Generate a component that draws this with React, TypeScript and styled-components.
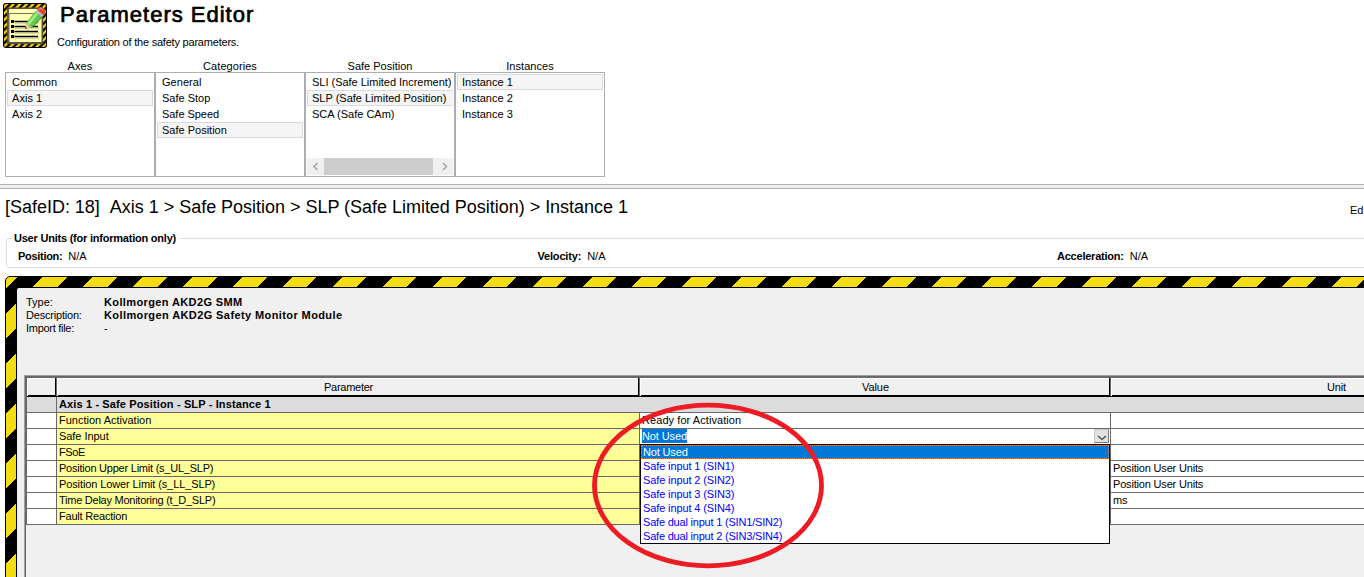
import React from 'react';
import styled, { createGlobalStyle, css } from 'styled-components';

const GlobalStyle = createGlobalStyle`
  *, *::before, *::after { box-sizing: border-box; }
  body {
    margin: 0;
    background: #fff;
    color: #000;
    font: 11px/12px 'Liberation Sans', Arial, sans-serif;
    overflow: hidden;
  }
`;

const GRID_LINE = '#696969';

const Page = styled.main`
  position: relative;
  display: flex;
  flex-direction: column;
  width: 1364px;
  height: 577px;
  overflow: hidden;
  white-space: pre;
`;

const Text = styled.span<{ $track?: number }>`
  letter-spacing: ${(p) => p.$track ?? 0}px;
`;

/* ---------- header ---------- */

const Header = styled.header`
  display: flex;
  flex: none;
  height: 59px;
  padding: 2px 0 0 3px;
  gap: 10px;
`;

const IconSlot = styled.div`
  padding-top: 1px;
  svg { display: block; }
`;

const HeaderText = styled.div`
  display: flex;
  flex-direction: column;
  gap: 9px;
`;

const Title = styled.h1`
  margin: 0;
  padding-left: 3px;
  font-size: 22px;
  font-weight: 400;
  line-height: 25px;
  letter-spacing: 1px;
  -webkit-text-stroke: 0.7px #000;
`;

const Subtitle = styled.p`
  margin: 0;
  letter-spacing: -0.21px;
`;

/* ---------- selector lists ---------- */

const Selectors = styled.section`
  display: flex;
  flex: none;
  height: 125px;
  padding-left: 5px;
`;

const SelectorColumn = styled.div`
  display: flex;
  flex-direction: column;
  width: 150px;
`;

const SelectorLabel = styled.div`
  height: 13px;
  line-height: 14px;
  text-align: center;
`;

const ListBox = styled.div`
  display: flex;
  flex-direction: column;
  height: 105px;
  padding: 1px;
  border: 1px solid #abadb3;
  overflow: hidden;
`;

const ListItem = styled.div<{ $selected?: boolean; $cut?: boolean }>`
  height: 16px;
  padding-left: 4px;
  border: 1px solid transparent;
  line-height: 14px;
  ${(p) => p.$selected && css`
    background: #f5f5f5;
    border-color: #dadada;
  `}
  ${(p) => p.$cut && css`border-right-width: 0;`}
`;

const ScrollBar = styled.div`
  display: flex;
  align-items: stretch;
  height: 17px;
  margin-top: auto;
  background: #f0f0f0;
`;

const ScrollArrow = styled.div`
  display: flex;
  align-items: center;
  justify-content: center;
  width: 17px;
`;

const ScrollThumb = styled.div`
  width: 109px;
  margin-right: 3px;
  background: #cdcdcd;
`;

const Splitter = styled.div`
  flex: none;
  height: 5px;
  background: #f0f0f0;
  border: solid #b0b0b0;
  border-width: 1px 0;
`;

/* ---------- breadcrumb and units ---------- */

const Breadcrumb = styled.div`
  display: flex;
  flex: none;
  justify-content: space-between;
  height: 44px;
  padding: 8px 0 0 5px;
`;

const Path = styled.h2`
  display: flex;
  gap: 10px;
  margin: 0;
  font-size: 18px;
  font-weight: 400;
  line-height: 20px;
  letter-spacing: -0.02px;
`;

const EditLink = styled.div`
  width: 14px;
  padding-top: 7px;
  overflow: hidden;
`;

const Units = styled.fieldset`
  flex: none;
  width: 1580px;
  height: 35px;
  margin: 0 0 0 6px;
  padding: 6px 0 0 11px;
  border: 1px solid #d5dfe5;
  border-radius: 3px;
`;

const UnitsLegend = styled.legend`
  height: 11px;
  margin-left: -6px;
  padding: 0 3px 0 2px;
  overflow: hidden;
  font-weight: 700;
  line-height: 10px;
  letter-spacing: -0.22px;
`;

const UnitsRow = styled.div`
  display: grid;
  grid-template-columns: repeat(3, 519.5px);
`;

const UnitEntry = styled.div`
  display: flex;
  gap: 6px;
`;

const UnitName = styled(Text)`
  font-weight: 700;
`;

/* ---------- hazard frame ---------- */

const HazardFrame = styled.section`
  flex: none;
  width: 1600px;
  height: 340px;
  margin: 8px 0 0 5px;
  padding: 10px;
  border: 1px solid #000;
  border-radius: 5px;
  background: repeating-linear-gradient(
    135deg,
    #f4dc12 0 7.78px,
    #000 7.78px 25.46px,
    #f4dc12 25.46px 35.355px
  ) padding-box;
`;

const HazardBody = styled.div`
  height: 100%;
  padding: 7px 0 0 7px;
  border: 1px solid #000;
  border-radius: 3px;
  background: #f0f0f0;
`;

const DeviceInfo = styled.dl`
  display: grid;
  grid-template-columns: 78px auto;
  grid-auto-rows: 13px;
  height: 80px;
  margin: 0;
  padding-left: 2px;
  line-height: 14px;
`;

const InfoName = styled.dt`
  margin: 0;
`;

const InfoValue = styled.dd<{ $plain?: boolean }>`
  margin: 0;
  font-weight: ${(p) => (p.$plain ? 400 : 700)};
`;

/* ---------- parameter table ---------- */

const TableFrame = styled.div`
  height: 260px;
  border-left: 1px solid #a0a0a0;
  border-top: 1px solid #a0a0a0;
`;

const TableInner = styled.div`
  height: 100%;
  border-left: 1px solid ${GRID_LINE};
  border-top: 1px solid ${GRID_LINE};
`;

const Grid = styled.div`
  width: 1536px;
  border-left: 1px solid ${GRID_LINE};
  border-top: 1px solid ${GRID_LINE};
`;

const rowColumns = css`
  display: grid;
  grid-template-columns: 30px 583px 471px 451px;
`;

const HeadRow = styled.div`
  ${rowColumns}
  height: 19px;
  border-bottom: 2px solid #000;
`;

const HeadCell = styled.div`
  padding-left: 1px;
  border-right: 1px solid ${GRID_LINE};
  box-shadow: inset -1px 0 #000, inset 1px 1px #fff;
  line-height: 18px;
  text-align: center;
`;

const Row = styled.div`
  ${rowColumns}
  height: 16px;
`;

const GroupRow = styled.div`
  display: grid;
  grid-template-columns: 30px 1505px;
  height: 16px;
`;

const Cell = styled.div<{ $fill?: string; $bold?: boolean }>`
  position: relative;
  padding-left: 2px;
  border: solid ${GRID_LINE};
  border-width: 0 1px 1px 0;
  background: ${(p) => p.$fill ?? '#fff'};
  font-weight: ${(p) => (p.$bold ? 700 : 400)};
  line-height: 15px;
`;

const ComboBox = styled.div`
  display: flex;
  justify-content: space-between;
  padding-right: 1px;
`;

const ComboText = styled.span`
  height: 14px;
  background: #0078d7;
  color: #fff;
  line-height: 15px;
  letter-spacing: -0.1px;
`;

const ComboButton = styled.button`
  display: flex;
  align-items: center;
  justify-content: center;
  width: 15px;
  height: 14px;
  margin: 0;
  padding: 4px 0 0;
  border: 1px solid;
  border-color: #c8c8c8 #7a7a7a #7a7a7a #c8c8c8;
  background: #e1e1e1;
`;

const Menu = styled.ul`
  position: absolute;
  z-index: 2;
  top: 15px;
  left: 0;
  width: 470px;
  margin: 0;
  padding: 0;
  border: 1px solid #000;
  background: #fff;
  list-style: none;
`;

const MenuItem = styled.li<{ $active?: boolean }>`
  height: 14px;
  padding-left: 2px;
  color: ${(p) => (p.$active ? '#fff' : '#0000ff')};
  background: ${(p) => (p.$active ? '#0078d7' : 'transparent')};
  outline: ${(p) => (p.$active ? '1px dotted #ff8728' : 'none')};
  outline-offset: -1px;
  line-height: 14px;
`;

const Annotation = styled.svg`
  position: absolute;
  z-index: 3;
  left: 590px;
  top: 400px;
  pointer-events: none;
`;

/* ---------- data ---------- */

type Entry = { label: string; track?: number };

const selectors: { title: Entry; items: Entry[]; selected: number; scroll?: boolean }[] = [
  {
    title: { label: 'Axes', track: 0.1 },
    items: [{ label: 'Common', track: 0.1 }, { label: 'Axis 1', track: 0.05 }, { label: 'Axis 2', track: 0.05 }],
    selected: 1,
  },
  {
    title: { label: 'Categories', track: 0.06 },
    items: [
      { label: 'General', track: 0.05 },
      { label: 'Safe Stop' },
      { label: 'Safe Speed', track: -0.04 },
      { label: 'Safe Position' },
    ],
    selected: 3,
  },
  {
    title: { label: 'Safe Position' },
    items: [
      { label: 'SLI (Safe Limited Increment)', track: -0.02 },
      { label: 'SLP (Safe Limited Position)' },
      { label: 'SCA (Safe CAm)' },
    ],
    selected: 1,
    scroll: true,
  },
  {
    title: { label: 'Instances', track: 0.06 },
    items: [{ label: 'Instance 1' }, { label: 'Instance 2' }, { label: 'Instance 3' }],
    selected: 0,
  },
];

const units: Entry[] = [
  { label: 'Position:', track: -0.3 },
  { label: 'Velocity:', track: -0.18 },
  { label: 'Acceleration:', track: -0.23 },
];

const parameters: { name: Entry; value?: Entry; unit?: Entry; combo?: boolean }[] = [
  { name: { label: 'Function Activation' }, value: { label: 'Ready for Activation', track: 0.07 } },
  { name: { label: 'Safe Input', track: -0.05 }, combo: true },
  { name: { label: 'FSoE', track: -0.38 } },
  { name: { label: 'Position Upper Limit (s_UL_SLP)', track: -0.23 }, unit: { label: 'Position User Units', track: -0.18 } },
  { name: { label: 'Position Lower Limit (s_LL_SLP)', track: -0.11 }, unit: { label: 'Position User Units', track: -0.18 } },
  { name: { label: 'Time Delay Monitoring (t_D_SLP)', track: -0.25 }, unit: { label: 'ms', track: -0.2 } },
  { name: { label: 'Fault Reaction', track: -0.2 } },
];

const options: Entry[] = [
  { label: 'Not Used', track: -0.15 },
  { label: 'Safe input 1 (SIN1)', track: -0.12 },
  { label: 'Safe input 2 (SIN2)', track: -0.12 },
  { label: 'Safe input 3 (SIN3)', track: -0.12 },
  { label: 'Safe input 4 (SIN4)', track: -0.12 },
  { label: 'Safe dual input 1 (SIN1/SIN2)', track: -0.2 },
  { label: 'Safe dual input 2 (SIN3/SIN4)', track: -0.2 },
];

/* ---------- drawings ---------- */

const EditorIcon = () => (
  <svg width="44" height="45" viewBox="0 0 44 45">
    <defs>
      <pattern id="tape" width="6.6" height="6.6" patternUnits="userSpaceOnUse">
        <rect width="6.6" height="6.6" fill="#000" />
        <path d="M0 3.3 3.3 0H6.6L0 6.6ZM3.3 6.6H6.6V3.3Z" fill="#ffd21c" />
      </pattern>
    </defs>
    <rect width="44" height="45" rx="3" fill="#000" />
    <rect x="1" y="1" width="42" height="43" rx="2" fill="url(#tape)" />
    <rect x="4" y="4.5" width="36" height="36.5" fill="#55553c" />
    <rect x="6" y="6" width="32.5" height="33" fill="#ffffb4" />
    <path d="M6 10.5H32M6 39V10" stroke="#77775a" strokeWidth="1" fill="none" />
    <path d="M11.500 18.500H35M11.500 23.500H35M11.500 28.500H35M11.500 33.500H35" stroke="#000" strokeWidth="1.300" />
    <path d="M12 20H36M12 25H36M12 30H36M12 35H36" stroke="#9a9a80" strokeWidth="0.700" />
    <path d="M8 17h3v3h-3zM8 22h3v3h-3zM8 27h3v3h-3zM8 32h3v3h-3z" fill="#000" />
    <path d="M22 26 23.500 19.500 28.500 24.500Z" fill="#e9c79a" />
    <path d="M22 26 22.600 23.800 24.200 25.300Z" fill="#333" />
    <path d="M23 20 32.500 8 39.500 13.500 28.500 25Z" fill="#62c84e" />
    <path d="M24 21 33.500 9 35.500 10.500 26 22.500Z" fill="#a4ec8c" />
    <path d="M28.500 25 39.500 13.500" stroke="#2e7f2a" strokeWidth="1" />
    <path d="M32.500 8.500 35 5.500 41.500 11.500 39 14Z" fill="#b9bdc9" />
    <path d="M34 6.500 36 4.300Q39 3.300 41.800 6 43 9 42 11L40.500 12.500Z" fill="#d9482b" />
    <path d="M36 6.500 38 5 40 7" stroke="#f59a80" strokeWidth="1" fill="none" />
  </svg>
);

const Chevron = ({ d, w, h, color, weight = 1.2 }: { d: string; w: number; h: number; color: string; weight?: number }) => (
  <svg width={w} height={h} viewBox={`0 0 ${w} ${h}`}>
    <path d={d} fill="none" stroke={color} strokeWidth={weight} />
  </svg>
);

/* ---------- page ---------- */

export default function App() {
  return (
    <Page>
      <GlobalStyle />
      <Header>
        <IconSlot><EditorIcon /></IconSlot>
        <HeaderText>
          <Title>Parameters Editor</Title>
          <Subtitle>Configuration of the safety parameters.</Subtitle>
        </HeaderText>
      </Header>

      <Selectors>
        {selectors.map((s) => (
          <SelectorColumn key={s.title.label}>
            <SelectorLabel><Text $track={s.title.track}>{s.title.label}</Text></SelectorLabel>
            <ListBox>
              {s.items.map((item, i) => (
                <ListItem key={item.label} $selected={i === s.selected} $cut={s.scroll}>
                  <Text $track={item.track}>{item.label}</Text>
                </ListItem>
              ))}
              {s.scroll && (
                <ScrollBar>
                  <ScrollArrow><Chevron d="M5.500 1 2 4.500 5.500 8" w={8} h={9} color="#a0a0a0" weight={1.4} /></ScrollArrow>
                  <ScrollThumb />
                  <ScrollArrow><Chevron d="M2 1 5.500 4.500 2 8" w={8} h={9} color="#a0a0a0" weight={1.4} /></ScrollArrow>
                </ScrollBar>
              )}
            </ListBox>
          </SelectorColumn>
        ))}
      </Selectors>

      <Splitter />

      <Breadcrumb>
        <Path>
          <span>[SafeID: 18]</span>
          <span>Axis 1 &gt; Safe Position &gt; SLP (Safe Limited Position) &gt; Instance 1</span>
        </Path>
        <EditLink>Ed</EditLink>
      </Breadcrumb>

      <Units>
        <UnitsLegend>User Units (for information only)</UnitsLegend>
        <UnitsRow>
          {units.map((u) => (
            <UnitEntry key={u.label}>
              <UnitName $track={u.track}>{u.label}</UnitName>
              <span>N/A</span>
            </UnitEntry>
          ))}
        </UnitsRow>
      </Units>

      <HazardFrame>
        <HazardBody>
          <DeviceInfo>
            <InfoName>Type:</InfoName>
            <InfoValue><Text $track={0.38}>Kollmorgen AKD2G SMM</Text></InfoValue>
            <InfoName><Text $track={-0.2}>Description:</Text></InfoName>
            <InfoValue><Text $track={0.4}>Kollmorgen AKD2G Safety Monitor Module</Text></InfoValue>
            <InfoName><Text $track={-0.28}>Import file:</Text></InfoName>
            <InfoValue $plain>-</InfoValue>
          </DeviceInfo>

          <TableFrame>
            <TableInner>
              <Grid>
                <HeadRow>
                  <HeadCell />
                  <HeadCell><Text $track={-0.26}>Parameter</Text></HeadCell>
                  <HeadCell><Text $track={-0.1}>Value</Text></HeadCell>
                  <HeadCell><Text $track={-0.15}>Unit</Text></HeadCell>
                </HeadRow>
                <GroupRow>
                  <Cell $fill="#dcdcdc" />
                  <Cell $fill="#dcdcdc" $bold>
                    <Text $track={0.13}>Axis 1 - Safe Position - SLP - Instance 1</Text>
                  </Cell>
                </GroupRow>
                {parameters.map((p) => (
                  <Row key={p.name.label}>
                    <Cell />
                    <Cell $fill="#ffff99"><Text $track={p.name.track}>{p.name.label}</Text></Cell>
                    <Cell>
                      {p.value && <Text $track={p.value.track}>{p.value.label}</Text>}
                      {p.combo && (
                        <>
                          <ComboBox>
                            <ComboText>Not Used</ComboText>
                            <ComboButton aria-label="Open list">
                              <Chevron d="M1 1 5 4.500 9 1" w={10} h={6} color="#444" />
                            </ComboButton>
                          </ComboBox>
                          <Menu>
                            {options.map((o, i) => (
                              <MenuItem key={o.label} $active={i === 0}>
                                <Text $track={o.track}>{o.label}</Text>
                              </MenuItem>
                            ))}
                          </Menu>
                        </>
                      )}
                    </Cell>
                    <Cell>{p.unit && <Text $track={p.unit.track}>{p.unit.label}</Text>}</Cell>
                  </Row>
                ))}
              </Grid>
            </TableInner>
          </TableFrame>
        </HazardBody>
      </HazardFrame>

      <Annotation width="236" height="171" viewBox="0 0 236 171">
        <ellipse cx="118" cy="85.500" rx="113.500" ry="80.300" fill="none" stroke="#ed1c24" strokeWidth="4.800" />
      </Annotation>
    </Page>
  );
}
